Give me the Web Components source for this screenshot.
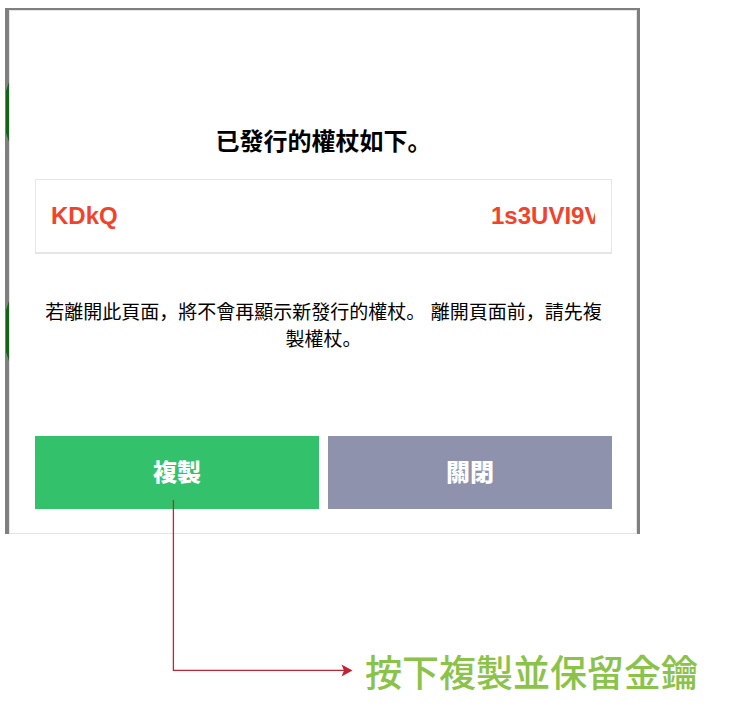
<!DOCTYPE html>
<html lang="ja">
<head>
<meta charset="utf-8">
<title>已發行的權杖</title>
<style>
body { margin: 0; background: #fff; color: #000; font-family: "Liberation Sans", "Noto Sans CJK JP", sans-serif; }
</style>
</head>
<body>
<guide-page></guide-page>
<script>
const define = (name, html) => {
  const template = document.createElement("template");
  template.innerHTML = html;
  customElements.define(name, class extends HTMLElement {
    constructor() {
      super();
      this.attachShadow({ mode: "open" }).append(template.content.cloneNode(true));
    }
  });
};

define("token-field", `
  <style>
    :host { display: flex; justify-content: space-between; align-items: center; box-sizing: border-box;
      height: 75px; padding: 0 16px 0 15px; border: 1px solid #e5e5e5; border-bottom-width: 2px;
      color: #f1432c; font-size: 24px; font-weight: 700; line-height: 30px; }
    .tail { width: 104px; overflow: hidden; white-space: nowrap; }
  </style>
  <span><slot name="start"></slot></span>
  <span class="tail"><slot name="end"></slot></span>`);

define("action-button", `
  <style>
    :host { display: block; flex: 1; }
    button { display: block; width: 100%; height: 73px; margin: 0; padding: 0; border: 0; color: #fff;
      background: var(--fill); font: inherit; font-size: 24px; font-weight: 900; line-height: 36px; cursor: pointer; }
  </style>
  <button type="button"><slot></slot></button>`);

define("edge-mark", `
  <style>
    :host { display: block; position: absolute; left: -4px; width: 4px; height: 60px; }
    svg { display: block; }
  </style>
  <svg width="4" height="60" aria-hidden="true"><path d="M4 0L1 9V51L4 60Z" fill="#126316"/></svg>`);

define("token-dialog", `
  <style>
    :host { display: block; position: relative; box-sizing: border-box; padding: 114px 25px 25px 26px;
      border: solid #7f7f7f; border-width: 2px 3px 0 4px; text-align: center;
      box-shadow: inset 0 0 0 1px #e5e5e5; }
    h1 { margin: 0 0 19px; font-size: 24px; line-height: 36px; font-weight: 700; }
    token-field { text-align: left; }
    p { margin: 45px 0 83px; padding: 0 5px; font-size: 19px; line-height: 27px; }
    .actions { display: flex; gap: 9px; }
    .copy { --fill: #33c26b; }
    .close { --fill: #8e92ac; }
    .upper { top: 72px; }
    .lower { top: 291px; }
  </style>
  <edge-mark class="upper"></edge-mark>
  <edge-mark class="lower"></edge-mark>
  <h1>已發行的權杖如下。</h1>
  <token-field><span slot="start">KDkQ</span><span slot="end">1s3UVI9V</span></token-field>
  <p>若離開此頁面，將不會再顯示新發行的權杖。 離開頁面前，請先複製權杖。</p>
  <div class="actions">
    <action-button class="copy">複製</action-button>
    <action-button class="close">關閉</action-button>
  </div>`);

define("callout-arrow", `
  <style>
    :host { display: block; position: absolute; left: 172px; top: 500px; pointer-events: none; }
    svg { display: block; }
  </style>
  <svg width="181" height="178" aria-hidden="true">
    <path d="M1.400 0V170.400H175" fill="none" stroke="#be2431" stroke-width="1.300"/>
    <path d="M180.500 170.500L169.500 164.500L172 170.500L169.500 176.500Z" fill="#be2431"/>
  </svg>`);

define("guide-page", `
  <style>
    :host { display: block; position: relative; padding: 8px 0 0 5px; }
    token-dialog { margin-right: 99px; }
    .caption { margin: 110px 0 0 360px; color: #8bc34a; font-family: "Noto Sans CJK JP", sans-serif;
      font-size: 37px; line-height: 54px; font-weight: 500; }
  </style>
  <token-dialog></token-dialog>
  <p class="caption">按下複製並保留金鑰</p>
  <callout-arrow></callout-arrow>`);
</script>
</body>
</html>
